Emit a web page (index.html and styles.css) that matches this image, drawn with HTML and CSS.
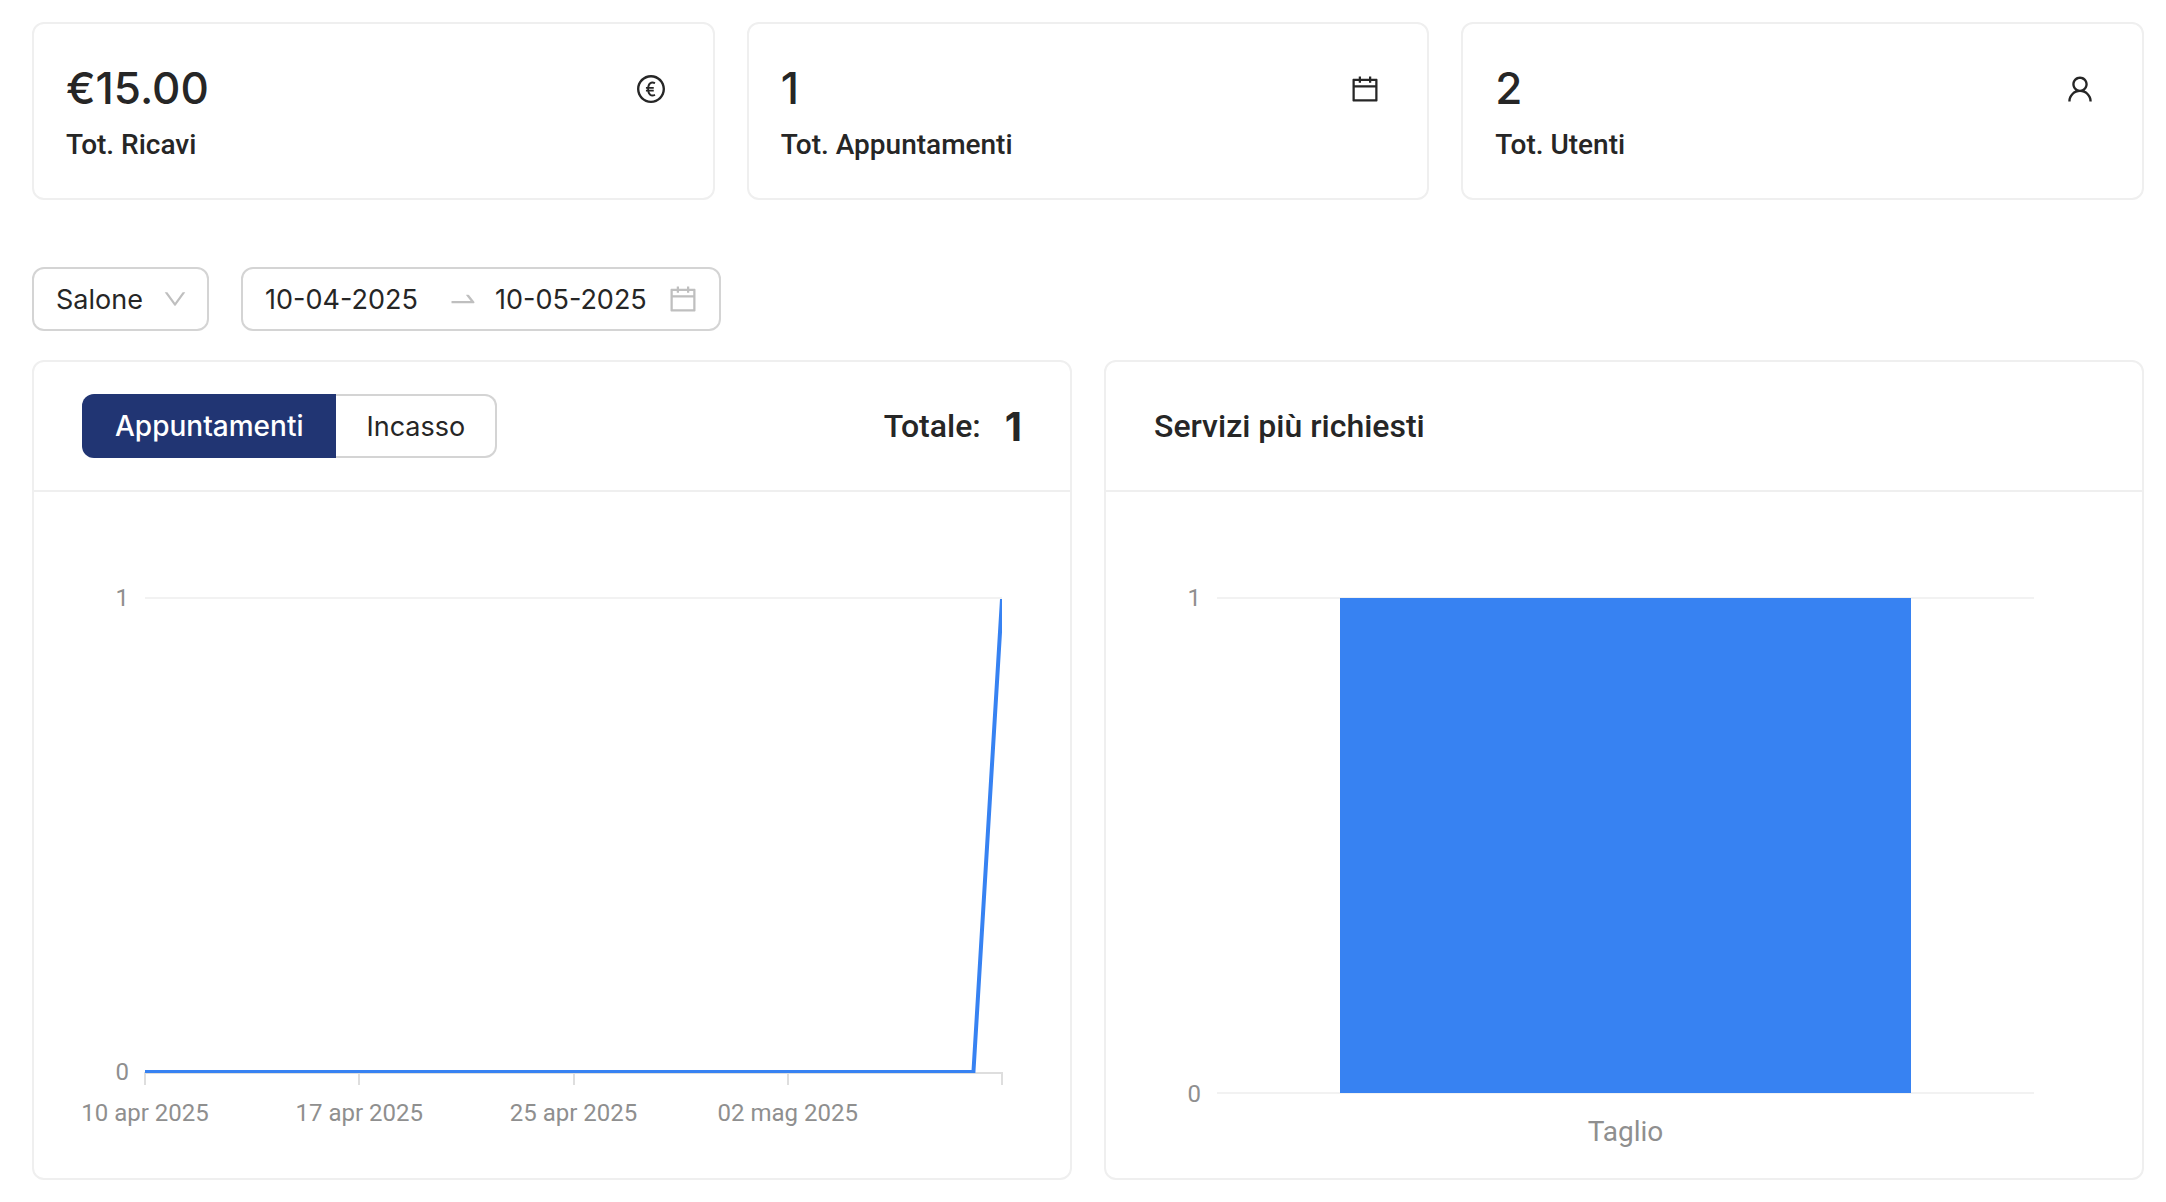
FILE: index.html
```html
<!DOCTYPE html>
<html lang="it">
<head>
    <meta charset="UTF-8">
    <meta name="viewport" content="width=device-width, initial-scale=1.0">
    <title>Dashboard</title>
    <link rel="stylesheet" href="styles.css">
</head>
<body>
    <main class="dashboard">

        <section class="stats">
            <div class="card stat">
                <div>
                    <div class="stat-value">€15.00</div>
                    <div class="stat-label">Tot. Ricavi</div>
                </div>
                <svg class="icon" viewBox="64 64 896 896" aria-hidden="true">
                    <path d="M512 64C264.6 64 64 264.6 64 512s200.6 448 448 448 448-200.6 448-448S759.4 64 512 64zm0 820c-205.4 0-372-166.6-372-372s166.6-372 372-372 372 166.6 372 372-166.6 372-372 372z"/>
                    <path class="icon-stroke" d="M640 326C520 270 420 330 420 512S520 754 640 698M350 476H600M350 564H600"/>
                </svg>
            </div>
            <div class="card stat">
                <div>
                    <div class="stat-value">1</div>
                    <div class="stat-label">Tot. Appuntamenti</div>
                </div>
                <svg class="icon" viewBox="64 64 896 896" aria-hidden="true">
                    <path d="M880 184H712v-64c0-4.4-3.6-8-8-8h-56c-4.4 0-8 3.6-8 8v64H384v-64c0-4.4-3.6-8-8-8h-56c-4.4 0-8 3.6-8 8v64H144c-17.7 0-32 14.3-32 32v664c0 17.7 14.3 32 32 32h736c17.7 0 32-14.3 32-32V216c0-17.7-14.3-32-32-32zm-40 656H184V460h656v380zM184 392V256h128v48c0 4.4 3.6 8 8 8h56c4.4 0 8-3.6 8-8v-48h256v48c0 4.4 3.6 8 8 8h56c4.4 0 8-3.6 8-8v-48h128v136H184z"/>
                </svg>
            </div>
            <div class="card stat">
                <div>
                    <div class="stat-value">2</div>
                    <div class="stat-label">Tot. Utenti</div>
                </div>
                <svg class="icon" viewBox="64 64 896 896" aria-hidden="true">
                    <path d="M858.5 763.6a374 374 0 00-80.6-119.5 375.63 375.63 0 00-119.5-80.6c-.4-.2-.8-.3-1.2-.5C719.5 518 760 444.7 760 362c0-137-111-248-248-248S264 225 264 362c0 82.7 40.5 156 102.8 201.1-.4.2-.8.3-1.2.5-44.8 18.9-85 46-119.5 80.6a375.63 375.63 0 00-80.6 119.5A371.7 371.7 0 00136 901.8a8 8 0 008 8.2h60c4.4 0 7.9-3.5 8-7.8 2-77.2 33-149.5 87.8-204.3 56.7-56.7 132-87.9 212.2-87.9s155.5 31.2 212.2 87.9C779 752.7 810 825 812 902.2c.1 4.4 3.6 7.8 8 7.8h60a8 8 0 008-8.2c-1-47.8-10.9-94.3-29.5-138.2zM512 534c-45.9 0-89.1-17.9-121.6-50.4S340 407.9 340 362c0-45.9 17.9-89.1 50.4-121.6S466.1 190 512 190s89.1 17.9 121.6 50.4S684 316.1 684 362c0 45.9-17.9 89.1-50.4 121.6S557.9 534 512 534z"/>
                </svg>
            </div>
        </section>

        <form class="filters">
            <div class="select">
                <select class="select-field" aria-label="Salone">
                    <option>Salone</option>
                </select>
                <svg class="select-arrow" viewBox="64 64 896 896" aria-hidden="true">
                    <path d="M884 256h-75c-5.1 0-9.9 2.5-12.9 6.6L512 654.2 227.9 262.6c-3-4.1-7.8-6.6-12.9-6.6h-75c-6.5 0-10.3 7.4-6.5 12.7l352.6 486.1c12.8 17.6 39 17.6 51.7 0l352.6-486.1c3.9-5.3.1-12.7-6.4-12.7z"/>
                </svg>
            </div>
            <div class="range">
                <input class="range-input" type="text" value="10-04-2025" aria-label="Data inizio">
                <svg class="range-arrow" viewBox="0 0 1024 1024" aria-hidden="true">
                    <path d="M873.1 596.2l-164-208A32 32 0 00684 376h-64.8c-6.7 0-10.4 7.7-6.3 13l144.3 183H152c-4.4 0-8 3.6-8 8v60c0 4.4 3.6 8 8 8h695.9c26.8 0 41.7-30.8 25.2-51.8z"/>
                </svg>
                <input class="range-input" type="text" value="10-05-2025" aria-label="Data fine">
                <svg class="range-calendar" viewBox="64 64 896 896" aria-hidden="true">
                    <path d="M880 184H712v-64c0-4.4-3.6-8-8-8h-56c-4.4 0-8 3.6-8 8v64H384v-64c0-4.4-3.6-8-8-8h-56c-4.4 0-8 3.6-8 8v64H144c-17.7 0-32 14.3-32 32v664c0 17.7 14.3 32 32 32h736c17.7 0 32-14.3 32-32V216c0-17.7-14.3-32-32-32zm-40 656H184V460h656v380zM184 392V256h128v48c0 4.4 3.6 8 8 8h56c4.4 0 8-3.6 8-8v-48h256v48c0 4.4 3.6 8 8 8h56c4.4 0 8-3.6 8-8v-48h128v136H184z"/>
                </svg>
            </div>
        </form>

        <section class="charts">
            <div class="card">
                <div class="card-header">
                    <div class="tabs">
                        <button type="button" class="tab active">Appuntamenti</button>
                        <button type="button" class="tab">Incasso</button>
                    </div>
                    <div class="total">Totale: <strong class="total-value">1</strong></div>
                </div>
                <div class="chart line-chart">
                    <div class="y-axis"><span>1</span><span>0</span></div>
                    <div class="line-plot">
                        <!-- 30 days, one unit each -->
                        <svg class="line" viewBox="0 0 30 1" preserveAspectRatio="none" aria-hidden="true">
                            <polyline points="0,1 29,1 30,0"/>
                        </svg>
                    </div>
                    <div class="x-axis">
                        <div class="ticks"><i></i><i></i><i></i><i></i></div>
                        <div class="x-labels">
                            <span>10 apr 2025</span>
                            <span>17 apr 2025</span>
                            <span>25 apr 2025</span>
                            <span>02 mag 2025</span>
                        </div>
                    </div>
                </div>
            </div>

            <div class="card">
                <div class="card-header">
                    <h2 class="card-title">Servizi più richiesti</h2>
                </div>
                <div class="chart bar-chart">
                    <div class="y-axis"><span>1</span><span>0</span></div>
                    <div class="bar-plot">
                        <div class="bar" style="width: 70%"></div>
                    </div>
                    <div class="bar-label">Taglio</div>
                </div>
            </div>
        </section>

    </main>
</body>
</html>
```
FILE: styles.css
```css
*{
    box-sizing: border-box;
}
body{
    margin: 0;
    background-color: #fff;
    color: #262626;
    font-family: Roboto, sans-serif;
    font-size: 28px;
}
.dashboard{
    padding: 22px 22px 22px 32px;
}
.card{
    border: 2px solid #efefef;
    border-radius: 12px;
    min-width: 0;
}

/* stats */
.stats{
    display: grid;
    grid-template-columns: repeat(3, 1fr);
    gap: 32px;
}
.stat{
    display: flex;
    justify-content: space-between;
    padding: 32px 48px 28px 32px;
}
.stat-value{
    font-family: Inter, sans-serif;
    font-size: 44px;
    font-weight: 500;
    line-height: 64px;
}
.stat-label{
    font-weight: 500;
    line-height: 50px;
}
.icon{
    width: 28px;
    height: 28px;
    margin-top: 19px;
    fill: currentColor;
}
.icon-stroke{
    fill: none;
    stroke: currentColor;
    stroke-width: 60;
}

/* filters */
.filters{
    display: flex;
    gap: 32px;
    margin: 67px 0 29px;
    font-family: Inter, sans-serif;
    font-size: 27px;
}
.select{
    display: grid;
    align-items: center;
    width: 177px;
}
.select-field{
    grid-area: 1 / 1;
    appearance: none;
    width: 100%;
    height: 64px;
    padding: 0 22px;
    border: 2px solid #d4d4d4;
    border-radius: 12px;
    background-color: #fff;
    color: inherit;
    font: inherit;
}
.select-arrow{
    grid-area: 1 / 1;
    justify-self: end;
    width: 24px;
    height: 24px;
    margin-right: 22px;
    fill: #bfbfbf;
    pointer-events: none;
}
.range{
    display: flex;
    align-items: center;
    width: 480px;
    height: 64px;
    padding: 0 22px;
    border: 2px solid #d4d4d4;
    border-radius: 12px;
}
.range-input{
    flex: 1;
    min-width: 0;
    padding: 0;
    border: 0;
    outline: 0;
    background: none;
    color: inherit;
    font: inherit;
}
.range-arrow{
    width: 32px;
    height: 32px;
    margin: 0 16px 0 8px;
    fill: #bfbfbf;
}
.range-calendar{
    width: 28px;
    height: 28px;
    fill: #bfbfbf;
}

/* charts */
.charts{
    display: grid;
    grid-template-columns: repeat(2, 1fr);
    gap: 32px;
}
.card-header{
    display: flex;
    align-items: center;
    justify-content: space-between;
    height: 130px;
    padding: 0 48px;
    border-bottom: 2px solid #efefef;
}
.card-title{
    margin: 0;
    font-size: 32px;
    font-weight: 500;
}
.tabs{
    display: flex;
}
.tab{
    height: 64px;
    padding: 0 30px;
    border: 2px solid #d4d4d4;
    border-left: 0;
    border-radius: 0 12px 12px 0;
    background-color: #fff;
    color: inherit;
    font-family: Inter, sans-serif;
    font-size: 27px;
}
.tab.active{
    padding: 0 33px;
    border: 0;
    border-radius: 12px 0 0 12px;
    background-color: #213573;
    color: #fff;
    font-size: 28px;
    font-weight: 500;
}
.total{
    display: flex;
    align-items: center;
    gap: 24px;
    font-size: 32px;
    font-weight: 500;
}
.total-value{
    font-family: Inter, sans-serif;
    font-size: 40px;
    font-weight: 700;
}
.chart{
    display: grid;
    column-gap: 16px;
    color: #8f8f8f;
    font-size: 24px;
}
.line-chart{
    grid-template-columns: 47px 1fr;
    padding: 105px 68px 0 48px;
}
.bar-chart{
    grid-template-columns: 47px 1fr;
    padding: 105px 108px 30px 48px;
}
.y-axis{
    display: flex;
    flex-direction: column;
    justify-content: space-between;
    margin: -11px 0 -12px;
    line-height: 24px;
    text-align: right;
}
.line-plot{
    height: 475px;
    border-top: 2px solid #f2f2f2;
}
.line{
    display: block;
    position: relative;
    width: 100%;
    height: 100%;
    overflow: visible;
    clip-path: inset(-1px 0 -1px 0);
}
.line polyline{
    fill: none;
    stroke: #3782f2;
    stroke-width: 4;
    vector-effect: non-scaling-stroke;
}
.x-axis{
    grid-column: 2;
}
.ticks{
    display: grid;
    grid-template-columns: repeat(4, 1fr);
    height: 13px;
    margin: 0 -1px;
    border: solid #dedede;
    border-width: 2px 2px 0 0;
}
.ticks i{
    border-left: 2px solid #dedede;
}
.x-labels{
    display: grid;
    grid-template-columns: repeat(4, 1fr);
    margin: 12px 12.5% 0 -12.5%;
    line-height: 32px;
    text-align: center;
}
.bar-plot{
    display: flex;
    justify-content: center;
    height: 497px;
    border: solid #f2f2f2;
    border-width: 2px 0;
}
.bar{
    margin: -1px 0;
    background-color: #3782f2;
}
.bar-label{
    grid-column: 2;
    padding-top: 22px;
    font-size: 28px;
    line-height: 32px;
    text-align: center;
}
```
